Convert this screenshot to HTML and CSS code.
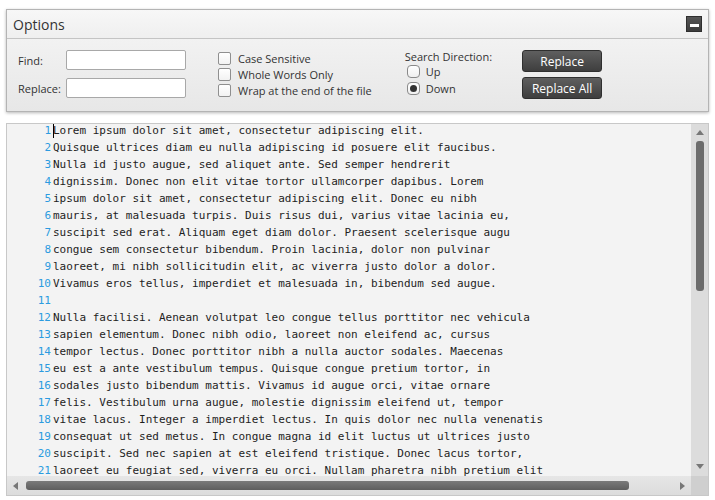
FILE: index.html
```html
<!DOCTYPE html>
<html>
<head>
<meta charset="utf-8">
<link rel="stylesheet" href="styles.css">
</head>
<body>
<div class="panel">
  <div class="panel-head">
    <span class="panel-title">Options</span>
    <span class="min-btn"><span class="min-bar"></span></span>
  </div>
  <div class="panel-body">
    <div class="fields">
      <label class="field-label">Find:</label>
      <span class="input"></span>
      <label class="field-label">Replace:</label>
      <span class="input"></span>
    </div>
    <div class="checks">
      <div class="check"><span class="box"></span>Case Sensitive</div>
      <div class="check"><span class="box"></span>Whole Words Only</div>
      <div class="check"><span class="box"></span>Wrap at the end of the file</div>
    </div>
    <div class="direction">
      <div class="dir-title">Search Direction:</div>
      <div class="radio"><span class="rbox"></span>Up</div>
      <div class="radio"><span class="rbox on"><span class="dot"></span></span>Down</div>
    </div>
    <div class="buttons">
      <span class="btn">Replace</span>
      <span class="btn">Replace All</span>
    </div>
  </div>
</div>

<div class="editor">
  <div class="code">
    <div class="gutter">
      <div>1</div><div>2</div><div>3</div><div>4</div><div>5</div><div>6</div><div>7</div><div>8</div><div>9</div><div>10</div><div>11</div><div>12</div><div>13</div><div>14</div><div>15</div><div>16</div><div>17</div><div>18</div><div>19</div><div>20</div><div>21</div>
    </div>
    <div class="lines"><span class="caret"></span><div>Lorem ipsum dolor sit amet, consectetur adipiscing elit.</div><div>Quisque ultrices diam eu nulla adipiscing id posuere elit faucibus.</div><div>Nulla id justo augue, sed aliquet ante. Sed semper hendrerit</div><div>dignissim. Donec non elit vitae tortor ullamcorper dapibus. Lorem</div><div>ipsum dolor sit amet, consectetur adipiscing elit. Donec eu nibh</div><div>mauris, at malesuada turpis. Duis risus dui, varius vitae lacinia eu,</div><div>suscipit sed erat. Aliquam eget diam dolor. Praesent scelerisque augu</div><div>congue sem consectetur bibendum. Proin lacinia, dolor non pulvinar</div><div>laoreet, mi nibh sollicitudin elit, ac viverra justo dolor a dolor.</div><div>Vivamus eros tellus, imperdiet et malesuada in, bibendum sed augue.</div><div>&nbsp;</div><div>Nulla facilisi. Aenean volutpat leo congue tellus porttitor nec vehicula</div><div>sapien elementum. Donec nibh odio, laoreet non eleifend ac, cursus</div><div>tempor lectus. Donec porttitor nibh a nulla auctor sodales. Maecenas</div><div>eu est a ante vestibulum tempus. Quisque congue pretium tortor, in</div><div>sodales justo bibendum mattis. Vivamus id augue orci, vitae ornare</div><div>felis. Vestibulum urna augue, molestie dignissim eleifend ut, tempor</div><div>vitae lacus. Integer a imperdiet lectus. In quis dolor nec nulla venenatis</div><div>consequat ut sed metus. In congue magna id elit luctus ut ultrices justo</div><div>suscipit. Sed nec sapien at est eleifend tristique. Donec lacus tortor,</div><div>laoreet eu feugiat sed, viverra eu orci. Nullam pharetra nibh pretium elit</div></div>
  </div>
  <div class="vscroll">
    <span class="arrow up"></span>
    <span class="vthumb"></span>
    <span class="arrow down"></span>
  </div>
  <div class="hscroll">
    <span class="arrow left"></span>
    <span class="hthumb"></span>
    <span class="arrow right"></span>
  </div>
  <div class="corner"></div>
</div>
</body>
</html>
```
FILE: styles.css
```css
html, body {
  margin: 0;
  padding: 0;
  background: #ffffff;
}
body {
  padding: 9px 6px 0 6px;
  font-family: "Open Sans", "Noto Sans", sans-serif;
  font-size: 11px;
  color: #333;
}
.panel {
  width: 701px;
  border: 1px solid #b4b4b4;
  box-shadow: 0 1px 3px rgba(0,0,0,0.28);
  background: linear-gradient(#f6f6f6, #e7e7e7);
}
.panel-head {
  height: 28px;
  border-bottom: 1px solid #c4c4c4;
  background: linear-gradient(#f7f7f7, #efefef);
  display: flex;
  align-items: center;
  justify-content: space-between;
  padding: 0 6px 0 6px;
}
.panel-title {
  font-size: 14px;
  color: #333;
}
.min-btn {
  width: 16px;
  height: 16px;
  background: linear-gradient(#555, #3c3c3c);
  border: 1px solid #2e2e2e;
  box-sizing: border-box;
  display: flex;
  align-items: center;
  justify-content: center;
}
.min-bar {
  width: 9px;
  height: 3px;
  background: #fff;
  margin-top: 3px;
}
.panel-body {
  height: 72px;
  box-sizing: border-box;
  padding: 11px 0 0 11px;
  display: flex;
  align-items: flex-start;
}
.fields {
  display: grid;
  grid-template-columns: 48px 120px;
  row-gap: 8px;
  align-items: center;
}
.field-label {
  color: #333;
}
.input {
  display: block;
  height: 20px;
  box-sizing: border-box;
  background: #fff;
  border: 1px solid #a8a8a8;
  border-radius: 2px;
}
.checks {
  margin-left: 32px;
  margin-top: 2px;
  display: flex;
  flex-direction: column;
  gap: 3px;
}
.check {
  display: flex;
  align-items: center;
  height: 13px;
  line-height: 13px;
}
.box {
  width: 13px;
  height: 13px;
  box-sizing: border-box;
  border: 1px solid #8f8f8f;
  border-radius: 2px;
  background: linear-gradient(#fff, #f2f2f2);
  margin-right: 7px;
}
.direction {
  margin-left: 33px;
  margin-top: 0px;
  display: flex;
  flex-direction: column;
}
.dir-title {
  height: 14px;
  line-height: 14px;
  margin-bottom: 1px;
}
.radio {
  display: flex;
  align-items: center;
  height: 13px;
  margin: 0 0 4px 2px;
}
.rbox {
  width: 13px;
  height: 13px;
  box-sizing: border-box;
  border: 1px solid #8a8a8a;
  border-radius: 4px;
  background: linear-gradient(#fff, #f0f0f0);
  margin-right: 6px;
  display: flex;
  align-items: center;
  justify-content: center;
}
.dot {
  width: 7px;
  height: 7px;
  border-radius: 50%;
  background: #333;
}
.buttons {
  margin-left: 30px;
  display: flex;
  flex-direction: column;
  gap: 5px;
}
.btn {
  width: 80px;
  height: 22px;
  box-sizing: border-box;
  border: 1px solid #2f2f2f;
  border-radius: 3px;
  background: linear-gradient(#5f5f5f, #3e3e3e);
  color: #fff;
  font-size: 12px;
  display: flex;
  align-items: center;
  justify-content: center;
}
.editor {
  margin-top: 11px;
  width: 703px;
  height: 373px;
  box-sizing: border-box;
  border: 1px solid #c8c8c8;
  background: #f3f3f3;
  display: grid;
  grid-template-columns: 1fr 17px;
  grid-template-rows: 1fr 19px;
  overflow: hidden;
}
.code {
  display: flex;
  overflow: hidden;
  font-family: "DejaVu Sans Mono", "Liberation Mono", monospace;
  font-size: 11px;
  line-height: 17px;
}
.gutter, .lines {
  margin-top: -2px;
}
.gutter {
  width: 44px;
  text-align: right;
  color: #2b9be0;
  flex: none;
}
.lines {
  position: relative;
  padding-left: 2px;
  color: #1e1e1e;
  white-space: pre;
}
.caret {
  position: absolute;
  left: 2px;
  top: 1px;
  width: 1px;
  height: 15px;
  background: #000;
}
.vscroll {
  background: #dcdcdc;
  display: flex;
  flex-direction: column;
  align-items: center;
  padding-top: 6px;
}
.vthumb {
  width: 8px;
  height: 150px;
  border-radius: 3px;
  background: #6c6c6c;
  margin-top: 6px;
}
.vscroll .down {
  margin-top: auto;
  margin-bottom: 7px;
}
.hscroll {
  background: linear-gradient(#e6e6e6, #dcdcdc);
  display: flex;
  align-items: center;
  padding-left: 6px;
}
.hthumb {
  width: 603px;
  height: 9px;
  border-radius: 3px;
  background: linear-gradient(#7a7a7a, #5e5e5e);
  margin-left: 8px;
}
.hscroll .right {
  margin-left: auto;
  margin-right: 6px;
}
.corner {
  background: #cfcfcf;
}
.arrow {
  width: 0;
  height: 0;
  display: block;
}
.up {
  border-left: 4px solid transparent;
  border-right: 4px solid transparent;
  border-bottom: 5px solid #777;
}
.down {
  border-left: 4px solid transparent;
  border-right: 4px solid transparent;
  border-top: 5px solid #777;
}
.left {
  border-top: 4px solid transparent;
  border-bottom: 4px solid transparent;
  border-right: 5px solid #777;
}
.right {
  border-top: 4px solid transparent;
  border-bottom: 4px solid transparent;
  border-left: 5px solid #777;
}
```
